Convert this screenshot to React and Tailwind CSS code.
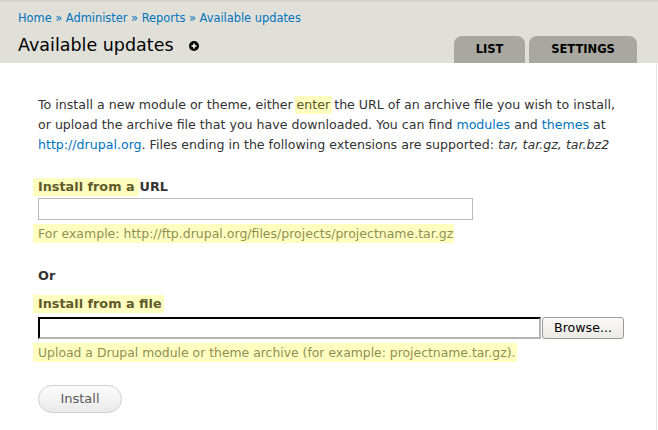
export default function App() {
  const hl = "bg-[#ffffbf]"
  return (
    <div className="w-[658px] h-[430px] bg-white overflow-hidden text-[#333]" style={{fontFamily: "'DejaVu Sans', Verdana, sans-serif"}}>
      {/* header */}
      <div className="h-[63px] bg-[#e0e0d8] border-t-2 border-[#d4d4cc] flex justify-between">
        <div className="pl-[18px] pt-[8px]">
          <div className="text-[11.4px] leading-[16px] text-[#0074bd]">
            <a href="#">Home</a> » <a href="#">Administer</a> » <a href="#">Reports</a> » <a href="#">Available updates</a>
          </div>
          <div className="flex items-center mt-[8px]">
            <h1 className="text-[17.5px] leading-[22px] text-black font-normal">Available updates</h1>
            <span className="ml-[15px] mt-[2px] w-[10px] h-[10px] rounded-full bg-black flex items-center justify-center">
              <svg width="6" height="6" viewBox="0 0 6 6"><path d="M3 0.5v5M0.5 3h5" stroke="#fff" strokeWidth="1.6" /></svg>
            </span>
          </div>
        </div>
        <div className="flex items-end gap-[4px] pr-[21px]">
          <a href="#" className="w-[71px] h-[27px] bg-[#a8a8a0] rounded-t-[8px] flex items-center justify-center text-[11.5px] font-bold text-black">LIST</a>
          <a href="#" className="w-[108px] h-[27px] bg-[#a8a8a0] rounded-t-[8px] flex items-center justify-center text-[11.5px] font-bold text-black">SETTINGS</a>
        </div>
      </div>

      {/* content */}
      <div className="w-[657px] h-[367px] border-r border-[#e6e6e6] pl-[38px] pt-[32px]">
        <p className="w-[586px] text-[12.6px] leading-[20px]">
          To install a new module or theme, either <span className={`inline-block leading-[18px] px-[2px] -mx-[2px] text-[#5a5a2a] ${hl}`}>enter</span> the URL of an archive file you wish to install, or upload the archive file that you have downloaded. You can find <a href="#" className="text-[#0074bd]">modules</a> and <a href="#" className="text-[#0074bd]">themes</a> at <a href="#" className="text-[#0074bd]">http://drupal.org</a>. Files ending in the following extensions are supported: <em>tar, tar.gz, tar.bz2</em>
        </p>

        <div className="mt-[23px] text-[12.8px] font-bold leading-[18px] flex">
          <span className={`pl-[5px] -ml-[5px] pr-[4px] text-[#5f5a2c] ${hl}`}>Install from a</span>
          <span className="ml-[1px] text-[#333]">URL</span>
        </div>
        <input type="text" className="block mt-[2px] w-[435px] h-[22px] border border-[#bbb] bg-white" />
        <div className={`inline-block mt-[4px] pl-[5px] -ml-[5px] pr-[1px] text-[12.5px] leading-[19px] text-[#8f8f55] ${hl}`}>
          For example: http://ftp.drupal.org/files/projects/projectname.tar.gz
        </div>

        <div className="mt-[22px] text-[12.8px] font-bold leading-[18px] text-[#333]">Or</div>

        <div className="mt-[10px] text-[12.8px] font-bold leading-[18px]">
          <span className={`inline-block pl-[5px] -ml-[5px] pr-[2px] text-[#5f5a2c] ${hl}`}>Install from a file</span>
        </div>
        <div className="mt-[4px] flex items-center gap-[1px]">
          <div className="w-[503px] h-[22px] border-2 border-t-black border-l-black border-b-[#b4b4b4] border-r-[#b4b4b4] bg-white" />
          <button className="w-[82px] h-[22px] rounded-[3px] border border-[#9a9a9a] bg-gradient-to-b from-[#fbfaf8] to-[#ebe9e4] text-[12.6px] leading-[20px] text-black">Browse...</button>
        </div>
        <div className={`inline-block mt-[4px] pl-[5px] -ml-[5px] pr-[2px] text-[12.4px] leading-[19px] text-[#8f8f55] ${hl}`}>
          Upload a Drupal module or theme archive (for example: projectname.tar.gz).
        </div>

        <div className="mt-[21px] flex">
          <button className="w-[84px] h-[28px] rounded-full border border-[#cfcfcf] bg-gradient-to-b from-[#fdfdfd] to-[#e9e9e9] text-[13px] leading-[26px] text-[#5a5a5a]">Install</button>
        </div>
      </div>
    </div>
  )
}
